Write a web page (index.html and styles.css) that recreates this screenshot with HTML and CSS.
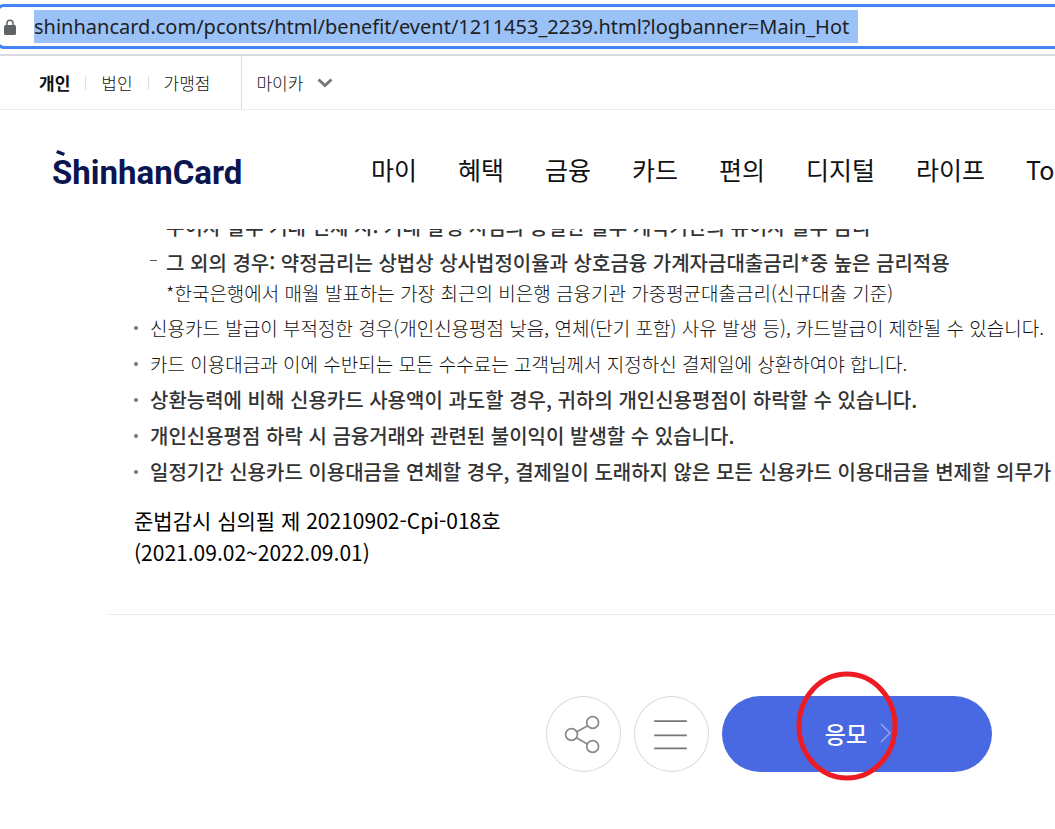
FILE: index.html
```html
<!DOCTYPE html>
<html lang="ko">
<head>
<meta charset="utf-8">
<title>신한카드</title>
<link rel="stylesheet" href="styles.css">
</head>
<body>
<form class="address">
  <svg class="lock" viewBox="0 0 12 16" aria-hidden="true"><path d="M3 7V4.300a3 3 0 0 1 6 0V7" fill="none" stroke="#5f6368" stroke-width="1.500"/><rect y="6" width="12" height="10" rx="1.500" fill="#5f6368"/></svg>
  <input class="url" type="text" aria-label="주소" value="shinhancard.com/pconts/html/benefit/event/1211453_2239.html?logbanner=Main_Hot">
</form>
<nav class="topmenu" aria-label="서비스">
  <a class="seg on" href="#">개인</a>
  <a class="seg" href="#">법인</a>
  <a class="seg" href="#">가맹점</a>
  <button class="mycar" type="button">마이카
    <svg class="chev" viewBox="0 0 16 10" aria-hidden="true"><path d="M1.500 1.500 8 7.500l6.500-6" fill="none" stroke="#777" stroke-width="3"/></svg>
  </button>
</nav>
<header class="header">
  <a class="logo" href="#">ShinhanCard<svg class="accent" viewBox="0 0 9 6" aria-hidden="true"><path d="M1.500 0 9 3 7.500 6 0 3z" fill="#0a1551"/></svg></a>
  <nav class="gnb" aria-label="주 메뉴">
    <a href="#">마이</a><a href="#">혜택</a><a href="#">금융</a><a href="#">카드</a><a href="#">편의</a><a href="#">디지털</a><a href="#">라이프</a><a href="#">To</a>
  </nav>
</header>
<main class="content">
  <div class="scrolled"><p class="sub">무이자 할부 거래 연체 시: 거래 발생 시점의 동일한 할부 계약기간의 유이자 할부 금리</p></div>
  <p class="sub dash">그 외의 경우: 약정금리는 상법상 상사법정이율과 상호금융 가계자금대출금리*중 높은 금리적용</p>
  <p class="note">*한국은행에서 매월 발표하는 가장 최근의 비은행 금융기관 가중평균대출금리(신규대출 기준)</p>
  <ul class="terms">
    <li>신용카드 발급이 부적정한 경우(개인신용평점 낮음, 연체(단기 포함) 사유 발생 등), 카드발급이 제한될 수 있습니다.</li>
    <li>카드 이용대금과 이에 수반되는 모든 수수료는 고객님께서 지정하신 결제일에 상환하여야 합니다.</li>
    <li class="strong">상환능력에 비해 신용카드 사용액이 과도할 경우, 귀하의 개인신용평점이 하락할 수 있습니다.</li>
    <li class="strong">개인신용평점 하락 시 금융거래와 관련된 불이익이 발생할 수 있습니다.</li>
    <li class="strong">일정기간 신용카드 이용대금을 연체할 경우, 결제일이 도래하지 않은 모든 신용카드 이용대금을 변제할 의무가 발생할 수 있습니다.</li>
  </ul>
  <p class="review">준법감시 심의필 제 20210902-Cpi-018호<br>(2021.09.02~2022.09.01)</p>
</main>
<div class="actions">
  <button class="round" type="button" aria-label="공유">
    <svg viewBox="0 0 76 76" aria-hidden="true"><g fill="none" stroke="#888" stroke-width="1.800"><circle cx="25.500" cy="38" r="6.200"/><circle cx="47.500" cy="25.500" r="6.200"/><circle cx="47.500" cy="50.500" r="6.200"/><path d="M31 35.200l11-6M30.500 41.500l11.500 6.500"/></g></svg>
  </button>
  <button class="round" type="button" aria-label="목록">
    <svg viewBox="0 0 76 76" aria-hidden="true"><path d="M20 24h34M20 39h34M20 52.500h34" fill="none" stroke="#777" stroke-width="1.800"/></svg>
  </button>
  <button class="apply" type="button">응모
    <svg class="next" viewBox="0 0 11 20" aria-hidden="true"><path d="M1 1l9 9-9 9" fill="none" stroke="#9fb0f0" stroke-width="1.200"/></svg>
    <svg class="mark" viewBox="0 0 102 110" aria-hidden="true"><ellipse cx="51" cy="55" rx="48" ry="52" fill="none" stroke="#ed1c24" stroke-width="5"/></svg>
  </button>
</div>
</body>
</html>
```
FILE: styles.css
```css
* { box-sizing: border-box; }
body {
  margin: 0;
  background: #fff;
  color: #111;
  font-family: "Noto Sans CJK KR", sans-serif;
  overflow-x: hidden;
}
a { color: inherit; text-decoration: none; }
p, ul { margin: 0; padding: 0; }
button { font-family: inherit; color: inherit; cursor: pointer; }
svg { display: block; }

.address {
  display: flex;
  align-items: center;
  gap: 18px;
  height: 45px;
  margin: 4px -8px 5px -4px;
  padding-left: 5px;
  border: 3px solid #4285f4;
  border-radius: 8px;
}
.lock { width: 12px; height: 16px; flex: none; }
.url {
  width: 824px;
  height: 33px;
  padding: 0;
  border: 0;
  outline: 0;
  background: #9bc2f7;
  color: #202124;
  font: 20px "Noto Sans", sans-serif;
}

.topmenu {
  display: flex;
  align-items: center;
  height: 56px;
  padding-left: 24px;
  border-top: 2px solid #dadce0;
  border-bottom: 1px solid #ececec;
  font-size: 17px;
  font-weight: 300;
}
.seg { padding: 0 15px; line-height: 14px; }
.seg + .seg { border-left: 1px solid #ddd; }
.on { font-weight: 700; }
.mycar {
  display: flex;
  align-items: center;
  gap: 14px;
  height: 100%;
  margin-left: 16px;
  padding: 0 14px;
  border: 0;
  border-left: 1px solid #ddd;
  background: none;
  font-size: 17px;
  font-weight: 300;
  line-height: 20px;
}
.chev { width: 16px; height: 10px; }

.header {
  display: flex;
  align-items: center;
  height: 119px;
  padding-left: 52px;
}
.logo {
  position: relative;
  flex: none;
  width: 319px;
  padding-top: 6px;
  color: #0a1551;
  font: 700 33px "Roboto", sans-serif;
}
.accent { position: absolute; left: 4px; top: 3px; width: 9px; height: 6px; }
.gnb {
  display: flex;
  gap: 41px;
  padding-bottom: 2px;
  font-size: 25px;
  font-weight: 400;
  white-space: nowrap;
}

.content {
  margin-left: 107px;
  padding: 0 0 46px 27px;
  border-bottom: 1px solid #ececec;
  white-space: nowrap;
  overflow: hidden;
}
.scrolled {
  display: flex;
  align-items: flex-end;
  height: 16px;
  overflow: hidden;
}
.sub {
  position: relative;
  padding-left: 32px;
  color: #333;
  font-size: 20px;
  font-weight: 500;
  line-height: 36px;
}
.dash::before {
  content: "";
  position: absolute;
  left: 16px;
  top: 15px;
  width: 7px;
  height: 1px;
  background: #555;
}
.note {
  padding-left: 32px;
  font-size: 19px;
  font-weight: 300;
  line-height: 24px;
}
.terms { margin: 5px 0 14px; list-style: none; }
.terms li {
  position: relative;
  padding-left: 16px;
  font-size: 19px;
  font-weight: 300;
  line-height: 36px;
}
.terms li::before {
  content: "";
  position: absolute;
  left: 0;
  top: 16px;
  width: 4px;
  height: 4px;
  border-radius: 50%;
  background: #777;
}
.terms .strong { color: #333; font-size: 20px; font-weight: 500; }
.review { color: #000; font-size: 21px; line-height: 32px; }

.actions {
  display: flex;
  justify-content: flex-end;
  gap: 13px;
  padding: 81px 63px 57px 0;
}
.round {
  width: 75px;
  height: 76px;
  padding: 0;
  border: 1px solid #d8d8d8;
  border-radius: 50%;
  background: #fff;
}
.apply {
  position: relative;
  display: flex;
  align-items: center;
  justify-content: center;
  gap: 13px;
  width: 270px;
  height: 76px;
  padding: 0 0 3px 2px;
  border: 0;
  border-radius: 38px;
  background: #4869e1;
  color: #fff;
  font-size: 23px;
  font-weight: 500;
}
.next { width: 11px; height: 20px; }
.mark { position: absolute; left: 74px; top: -25px; width: 102px; height: 110px; }
```
